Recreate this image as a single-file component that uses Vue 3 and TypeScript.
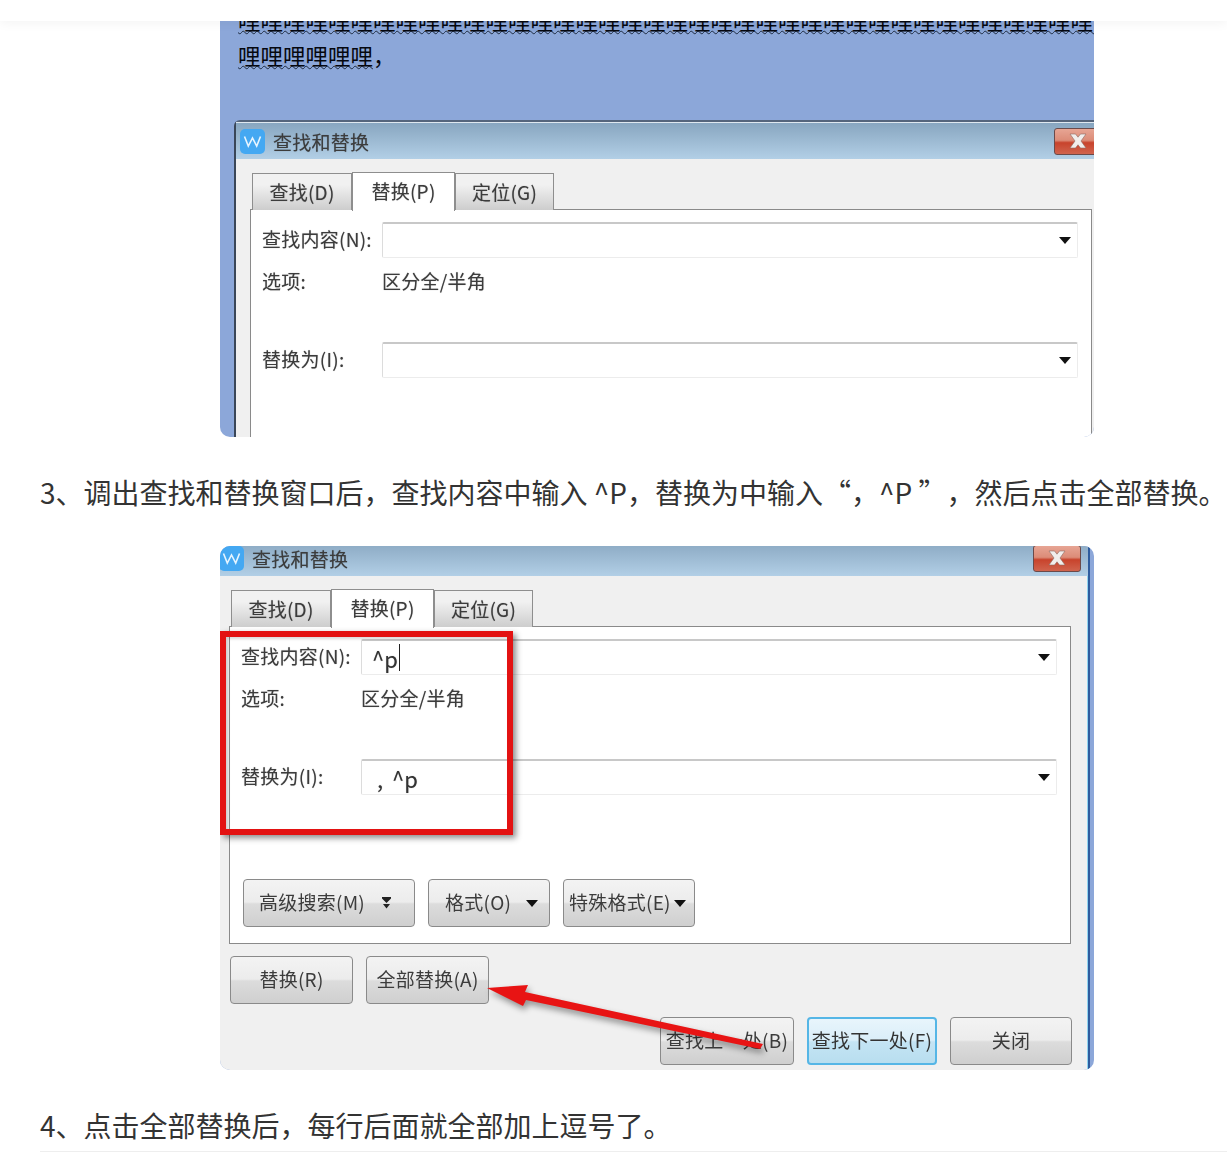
<template>
  <div class="page">
    <header class="topbar"></header>
    <article class="article">
      <template v-for="shot in shots" :key="shot.id">
        <figure class="shot" :class="shot.id">
          <div v-if="shot.id === 'first'" class="doc-text">
            <div class="doc-line"><span>{{ '哩'.repeat(39) }}</span></div>
            <div class="doc-line"><span>哩哩哩哩哩哩</span>，</div>
          </div>

          <section class="dialog">
            <div class="window">
              <div class="titlebar">
                <svg class="app-icon" viewBox="0 0 25 25">
                  <rect width="25" height="25" rx="5" fill="#44a8f2" />
                  <path d="M4.5 7.5l3.8 9.5 4.2-8 4.2 8 3.8-9.5" fill="none" stroke="#e6f5ff" stroke-width="1.6" />
                </svg>
                <span class="title">查找和替换</span>
                <button class="close">
                  <svg viewBox="0 0 20 16" width="20" height="16">
                    <path d="M2 1h5.500L10 4.200 12.500 1H18l-5 7 5 7h-5.500L10 11.800 7.500 15H2l5-7z" fill="#f1eeec" stroke="#8d6a62" stroke-width=".6" />
                  </svg>
                </button>
              </div>

              <div class="body">
                <div class="tabs">
                  <div class="tab">查找(D)</div>
                  <div class="tab active">替换(P)</div>
                  <div class="tab last">定位(G)</div>
                </div>

                <div class="panel">
                  <div class="row">
                    <label>查找内容(N):</label>
                    <div class="field">
                      <span class="value">{{ shot.find }}<i v-if="shot.find" class="caret"></i></span>
                      <b class="drop"></b>
                    </div>
                  </div>
                  <div class="row options">
                    <label>选项:</label>
                    <span>区分全/半角</span>
                  </div>
                  <div class="row replace">
                    <label>替换为(I):</label>
                    <div class="field">
                      <span class="value comma">{{ shot.replace }}</span>
                      <b class="drop"></b>
                    </div>
                  </div>
                  <div class="advanced">
                    <button class="btn search">
                      <span>高级搜索(M)</span>
                      <svg viewBox="0 0 9 12" width="9" height="12">
                        <path d="M0 0h9v1.500L4.500 6 0 1.500zM1 7h7L4.500 11.500z" fill="#222" />
                      </svg>
                    </button>
                    <button class="btn format"><span>格式(O)</span><b class="drop"></b></button>
                    <button class="btn special"><span>特殊格式(E)</span><b class="drop"></b></button>
                  </div>
                </div>

                <div class="actions left">
                  <button class="btn"><span>替换(R)</span></button>
                  <button class="btn"><span>全部替换(A)</span></button>
                </div>
                <div class="actions right">
                  <button class="btn prev"><span>查找上一处(B)</span></button>
                  <button class="btn next"><span>查找下一处(F)</span></button>
                  <button class="btn"><span>关闭</span></button>
                </div>
              </div>
            </div>
          </section>

          <template v-if="shot.id === 'second'">
            <div class="red-box"></div>
            <svg class="arrow" viewBox="0 0 300 90" width="300" height="90">
              <path d="M7 18l41-3-3 7 238 52-3 5-234-49-3 6z" fill="#e81414" />
            </svg>
          </template>
        </figure>
        <p class="step">{{ shot.caption }}</p>
      </template>
      <div class="rule"></div>
    </article>
  </div>
</template>

<script setup lang="ts">
interface Shot {
  id: 'first' | 'second'
  find: string
  replace: string
  caption: string
}

const shots: Shot[] = [
  {
    id: 'first',
    find: '',
    replace: '',
    caption: '3、调出查找和替换窗口后，查找内容中输入 ^P，替换为中输入“，^P ”，然后点击全部替换。',
  },
  {
    id: 'second',
    find: '^p',
    replace: ', ^p',
    caption: '4、点击全部替换后，每行后面就全部加上逗号了。',
  },
]
</script>

<style scoped>
.page {
  position: relative;
  height: 1171px;
  overflow: hidden;
  background: #fff;
  font-family: "Noto Sans CJK SC", "Noto Sans", sans-serif;
}

.topbar {
  position: absolute;
  top: 0;
  left: 0;
  right: 0;
  height: 21px;
  background: #fff;
  box-shadow: 0 2px 12px rgba(0, 0, 0, 0.05);
  z-index: 10;
}

.article {
  padding-left: 40px;
}

.step {
  margin: 30px 0 29px;
  font-size: 28px;
  line-height: 50px;
  color: #333;
  white-space: nowrap;
  text-spacing-trim: space-all;
}

.rule {
  height: 1px;
  margin-top: -28px;
  background: #eee;
}

.shot {
  position: relative;
  width: 874px;
  margin: 0 0 0 180px;
  overflow: hidden;
  border-radius: 0 0 10px 10px;
  background: #8ca7d9;
}

.shot.first {
  height: 437px;
}

.shot.second {
  height: 524px;
  border-radius: 10px;
}

.doc-text {
  padding: 3px 0 0 18px;
  height: 120px;
  box-sizing: border-box;
  font-size: 22.5px;
  line-height: 35px;
  color: #05070f;
  white-space: nowrap;
}

.doc-line span {
  text-decoration: underline wavy #1c2a40 1px;
  text-underline-offset: 0;
}

.dialog {
  width: 881px;
  filter: blur(0.4px);
  letter-spacing: 0.25px;
  text-shadow: 0 0 1px rgba(0, 0, 0, 0.35);
}

.first .dialog {
  margin-left: 14px;
}

.second .dialog {
  margin: -9px 0 0 -7px;
}

.window {
  box-sizing: border-box;
  width: 877px;
  border-top: 2px solid #55657c;
  border-left: 2px solid #3a4658;
  border-right: 2px solid #2f5c9e;
  border-radius: 6px 6px 0 0;
  background: #f0f0f0;
  box-shadow: inset -1px 0 0 #8fd4f0;
}

.titlebar {
  display: flex;
  align-items: center;
  height: 37px;
  padding-left: 4px;
  border-top: 1px solid #dfe8f0;
  background: linear-gradient(#88a6c0, #b2cfe6);
  box-sizing: border-box;
}

.app-icon {
  width: 25px;
  height: 25px;
  flex: none;
}

.title {
  margin-left: 8px;
  font-size: 19px;
  color: #3c3c3c;
}

.close {
  display: flex;
  align-items: center;
  justify-content: center;
  box-sizing: border-box;
  width: 48px;
  height: 27px;
  margin: 0 7px 0 auto;
  padding: 0;
  border: 1.5px solid #6b4a4a;
  border-radius: 3px;
  background: linear-gradient(#e7a594 0, #dc8c78 45%, #c8432c 55%, #d0644e 100%);
}

.body {
  height: 520px;
  padding: 12px 0 0 14px;
  box-sizing: border-box;
}

.tabs {
  display: flex;
  align-items: flex-end;
  height: 39px;
  margin-left: 2px;
  position: relative;
  z-index: 1;
}

.tab {
  box-sizing: border-box;
  width: 100px;
  height: 37px;
  border: 1.5px solid #8e8e8e;
  border-bottom: 0;
  background: linear-gradient(#f1f1f1 30%, #cdcdcd);
  color: #3c3c3c;
  font-size: 19px;
  line-height: 35px;
  text-align: center;
}

.tab.active {
  width: 103px;
  height: 39px;
  background: #fff;
  margin-bottom: -1px;
  line-height: 35px;
}

.tab.last {
  width: 99px;
}

.panel {
  box-sizing: border-box;
  width: 842px;
  height: 318px;
  margin-top: -1px;
  padding: 12px 13px 0 11px;
  border: 1.5px solid #8a8a8a;
  background: #fff;
  font-size: 19px;
  color: #3c3c3c;
}

.row {
  display: flex;
  align-items: center;
  height: 36px;
}

.row label {
  flex: none;
  width: 120px;
  margin-bottom: 3px;
}

.options {
  height: 24px;
  margin-top: 12px;
}

.options span {
  margin-bottom: 3px;
}

.replace {
  margin-top: 48px;
}

.field {
  flex: 1;
  display: flex;
  align-items: center;
  justify-content: space-between;
  box-sizing: border-box;
  height: 36px;
  padding: 0 6px 0 10px;
  border: 1.5px solid #ececec;
  border-top: 2px solid #c8c8c8;
  border-left-color: #dcdcdc;
  border-radius: 2px;
}

.value {
  display: flex;
  align-items: center;
  font-size: 22px;
  letter-spacing: 0;
  color: #333;
  white-space: pre;
}

.value.comma {
  padding-left: 5px;
  word-spacing: 4px;
}

.caret {
  display: inline-block;
  width: 1.5px;
  height: 27px;
  margin-left: 1px;
  background: #222;
}

.drop {
  display: inline-block;
  width: 0;
  height: 0;
  border: 6px solid transparent;
  border-top: 7px solid #111;
  border-bottom: 0;
}

.advanced {
  display: flex;
  gap: 13px;
  margin-top: 84px;
  margin-left: 2px;
}

.btn {
  box-sizing: border-box;
  width: 122px;
  height: 48px;
  padding: 0;
  border: 1.5px solid #8a8a8a;
  border-radius: 4px;
  background: linear-gradient(#f3f3f3 0, #ececec 48%, #dcdcdc 52%, #cfcfcf 100%);
  color: #3c3c3c;
  font-family: inherit;
  font-size: 19px;
  letter-spacing: inherit;
}

.btn span {
  display: block;
  margin-bottom: 4px;
  text-shadow: inherit;
}

.search {
  width: 172px;
  display: flex;
  align-items: center;
  padding-left: 15px;
  gap: 17px;
}

.format,
.special {
  display: flex;
  align-items: center;
}

.format {
  padding-left: 16px;
  gap: 15px;
}

.special {
  width: 132px;
  padding-left: 5px;
  gap: 3px;
}

.actions {
  display: flex;
  gap: 13px;
}

.actions.left {
  margin: 12px 0 0 1px;
}

.actions.left .btn {
  width: 123px;
}

.actions.right {
  justify-content: flex-end;
  width: 843px;
  margin-top: 13px;
}

.prev {
  width: 134px;
}

.next {
  width: 130px;
  border: 2.5px solid #55b6e6;
  background: linear-gradient(#e8f5fc 0, #daeef9 48%, #c4e4f4 52%, #b8deef 100%);
  color: #333;
}

.red-box {
  position: absolute;
  left: 0;
  top: 85px;
  box-sizing: border-box;
  width: 293px;
  height: 204px;
  border: 6px solid #e31212;
  box-shadow: 3px 3px 6px rgba(0, 0, 0, 0.45), inset 2px 2px 3px rgba(0, 0, 0, 0.15);
}

.arrow {
  position: absolute;
  left: 260px;
  top: 424px;
  filter: drop-shadow(2px 4px 3px rgba(0, 0, 0, 0.4));
}
</style>

<style>
html,
body {
  margin: 0;
  overflow: hidden;
}
</style>
